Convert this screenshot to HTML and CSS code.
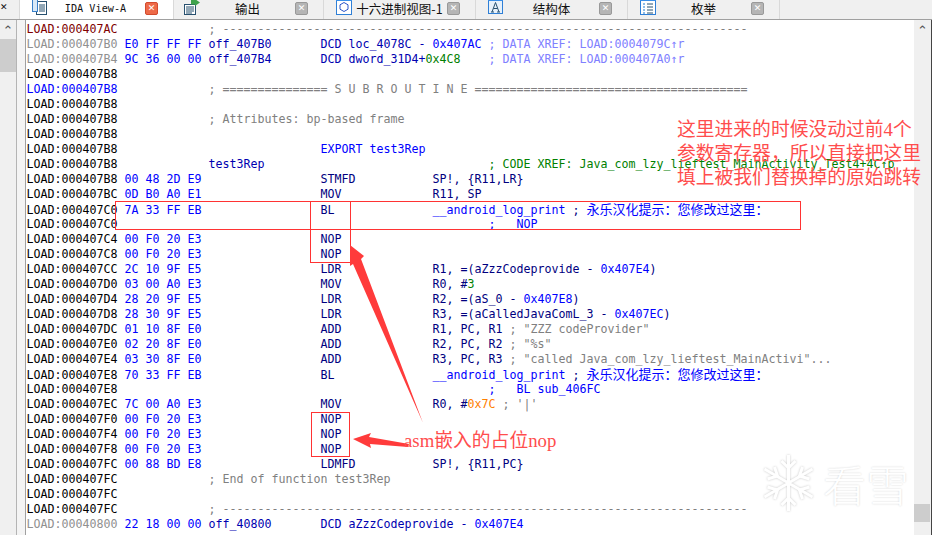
FILE: index.html
```html
<!DOCTYPE html>
<html lang="zh">
<head>
<meta charset="utf-8">
<title>IDA View-A</title>
<link rel="stylesheet" href="styles.css">
</head>
<body>
<div class="app">
  <div class="tabs">
    <div class="tab-stub"><span class="stub-x">✕</span></div>
    <div class="tab active">
      <svg class="ticon" viewBox="0 0 16 16"><rect x="4.5" y="2.5" width="10" height="13" fill="#fff" stroke="#27506f"/><rect x="0.5" y="0.5" width="5" height="12" fill="#d9e9f7" stroke="#3a80c9"/><path d="M7 6h6M7 8h6M7 10h6M7 12h6" stroke="#27506f"/></svg>
      <span class="tlabel mono">IDA View-A</span>
      <span class="tclose red">✕</span>
    </div>
    <div class="tab w1">
      <svg class="ticon" viewBox="0 0 16 16"><rect x="0.5" y="5.5" width="11" height="10" fill="#fff" stroke="#27506f"/><path d="M2 8h8M2 10h8M2 12h8M2 14h6" stroke="#27506f"/><path d="M7 1h4V0l5 3.5L11 7V5.500H7z" fill="#3fa34d"/></svg>
      <span class="tlabel">输出</span>
      <span class="tclose">✕</span>
    </div>
    <div class="tab w2">
      <svg class="ticon" viewBox="0 0 16 16"><rect x="0.500" y="0.500" width="15" height="15" fill="#fff" stroke="#2f7fd6"/><rect x="0" y="0" width="16" height="2" fill="#3a8fe8"/><path d="M8 3.500l4 2.300v4.400l-4 2.300-4-2.300V5.800z" fill="#fff" stroke="#2b55c9"/></svg>
      <span class="tlabel">十六进制视图-1</span>
      <span class="tclose">✕</span>
    </div>
    <div class="tab w3">
      <svg class="ticon" viewBox="0 0 16 16"><rect x="0.500" y="0.500" width="14" height="14" fill="#e6f1fb" stroke="#2f7fd6"/><rect x="0" y="0" width="15" height="2" fill="#3a8fe8"/><path d="M4 13L7.500 3.500 11 13M5.500 9.500h4M3 13h3M9 13h3" fill="none" stroke="#27506f"/></svg>
      <span class="tlabel">结构体</span>
      <span class="tclose">✕</span>
    </div>
    <div class="tab w4">
      <svg class="ticon" viewBox="0 0 16 16"><rect x="0.500" y="0.500" width="15" height="15" fill="#fff" stroke="#2f7fd6"/><rect x="0" y="0" width="16" height="2" fill="#3a8fe8"/><path d="M3 5h2M3 8h2M3 11h2M3 14h2" stroke="#1d7ad1"/><path d="M7 5h6M7 8h6M7 11h6M7 14h6" stroke="#27506f"/></svg>
      <span class="tlabel">枚举</span>
      <span class="tclose">✕</span>
    </div>
    <div class="tab-rest"></div>
  </div>
  <div class="main">
    <div class="gutter">
      <div class="vbar">
        <div class="up">⌃</div>
        <div class="thumb-left"></div>
      </div>
    </div>
    <div class="code mono">
<div class="row"><span class="red-d">LOAD:000407AC</span>             <span class="c">; ---------------------------------------------------------------------------</span></div>
<div class="row"><span class="g">LOAD:000407B0</span> <span class="b">E0 FF FF FF</span> <span class="n">off_407B0</span>       <span class="n">DCD loc_4078C - </span><span class="b">0x407AC</span> <span class="x">; DATA XREF: LOAD:0004079C↑r</span></div>
<div class="row"><span class="g">LOAD:000407B4</span> <span class="b">9C 36 00 00</span> <span class="n">off_407B4</span>       <span class="n">DCD dword_31D4+</span><span class="gr">0x4C8</span>    <span class="x">; DATA XREF: LOAD:000407A0↑r</span></div>
<div class="row">LOAD:000407B8</div>
<div class="row"><span class="bl">LOAD:000407B8</span>             <span class="c">; =============== S U B R O U T I N E =======================================</span></div>
<div class="row">LOAD:000407B8</div>
<div class="row">LOAD:000407B8             <span class="c">; Attributes: bp-based frame</span></div>
<div class="row">LOAD:000407B8</div>
<div class="row">LOAD:000407B8                             <span class="b">EXPORT test3Rep</span></div>
<div class="row">LOAD:000407B8             <span class="n">test3Rep</span>                                <span class="grn">; CODE XREF: Java_com_lzy_lieftest_MainActivity_Test4+4C↑p</span></div>
<div class="row">LOAD:000407B8 <span class="b">00 48 2D E9</span>                 <span class="k">STMFD</span>           <span class="k">SP!, {R11,LR}</span></div>
<div class="row">LOAD:000407BC <span class="b">0D B0 A0 E1</span>                 <span class="k">MOV</span>             <span class="k">R11, SP</span></div>
<div class="row">LOAD:000407C0 <span class="b">7A 33 FF EB</span>                 <span class="k">BL</span>              <span class="bu">__android_log_print</span> <span class="k">;</span> <span class="cj">永乐汉化提示：您修改过这里：</span></div>
<div class="row">LOAD:000407C0                                                     <span class="b">;   NOP</span></div>
<div class="row">LOAD:000407C4 <span class="b">00 F0 20 E3</span>                 <span class="k">NOP</span></div>
<div class="row">LOAD:000407C8 <span class="b">00 F0 20 E3</span>                 <span class="k">NOP</span></div>
<div class="row">LOAD:000407CC <span class="b">2C 10 9F E5</span>                 <span class="k">LDR</span>             <span class="k">R1, =(aZzzCodeprovide - </span><span class="b">0x407E4</span><span class="k">)</span></div>
<div class="row">LOAD:000407D0 <span class="b">03 00 A0 E3</span>                 <span class="k">MOV</span>             <span class="k">R0, #</span><span class="gr">3</span></div>
<div class="row">LOAD:000407D4 <span class="b">28 20 9F E5</span>                 <span class="k">LDR</span>             <span class="k">R2, =(aS_0 - </span><span class="b">0x407E8</span><span class="k">)</span></div>
<div class="row">LOAD:000407D8 <span class="b">28 30 9F E5</span>                 <span class="k">LDR</span>             <span class="k">R3, =(aCalledJavaComL_3 - </span><span class="b">0x407EC</span><span class="k">)</span></div>
<div class="row">LOAD:000407DC <span class="b">01 10 8F E0</span>                 <span class="k">ADD</span>             <span class="k">R1, PC, R1</span> <span class="c">; "ZZZ codeProvider"</span></div>
<div class="row">LOAD:000407E0 <span class="b">02 20 8F E0</span>                 <span class="k">ADD</span>             <span class="k">R2, PC, R2</span> <span class="c">; "%s"</span></div>
<div class="row">LOAD:000407E4 <span class="b">03 30 8F E0</span>                 <span class="k">ADD</span>             <span class="k">R3, PC, R3</span> <span class="c">; "called Java_com_lzy_lieftest_MainActivi"...</span></div>
<div class="row">LOAD:000407E8 <span class="b">70 33 FF EB</span>                 <span class="k">BL</span>              <span class="bu">__android_log_print</span> <span class="k">;</span> <span class="cj">永乐汉化提示：您修改过这里：</span></div>
<div class="row">LOAD:000407E8                                                     <span class="b">;   BL sub_406FC</span></div>
<div class="row">LOAD:000407EC <span class="b">7C 00 A0 E3</span>                 <span class="k">MOV</span>             <span class="k">R0, #</span><span class="o">0x7C</span> <span class="c">; '|'</span></div>
<div class="row">LOAD:000407F0 <span class="b">00 F0 20 E3</span>                 <span class="k">NOP</span></div>
<div class="row">LOAD:000407F4 <span class="b">00 F0 20 E3</span>                 <span class="k">NOP</span></div>
<div class="row">LOAD:000407F8 <span class="b">00 F0 20 E3</span>                 <span class="k">NOP</span></div>
<div class="row">LOAD:000407FC <span class="b">00 88 BD E8</span>                 <span class="k">LDMFD</span>           <span class="k">SP!, {R11,PC}</span></div>
<div class="row">LOAD:000407FC             <span class="c">; End of function test3Rep</span></div>
<div class="row">LOAD:000407FC</div>
<div class="row">LOAD:000407FC             <span class="c">; ---------------------------------------------------------------------------</span></div>
<div class="row"><span class="g">LOAD:00040800</span> <span class="b">22 18 00 00</span> <span class="n">off_40800</span>       <span class="n">DCD aZzzCodeprovide - </span><span class="b">0x407E4</span></div>
    </div>
    <div class="sbar">
      <div class="up">⌃</div>
      <div class="thumb-right"></div>
    </div>
    <div class="box box1"></div>
    <div class="box box2"></div>
    <div class="box box3"></div>
    <svg class="arrows" viewBox="0 0 932 535">
      <path d="M350 245L364 256 361 259 423 423 353 264 350 266Z" fill="#ff3b3b"/>
      <path d="M353 439L371 433 369 437 409 444 408 447 370 444 371 448Z" fill="#ff3b3b"/>
    </svg>
    <div class="note note1">这里进来的时候没动过前4个<br>参数寄存器，所以直接把这里<br>填上被我们替换掉的原始跳转</div>
    <div class="note note2">asm嵌入的占位nop</div>
    <div class="mark">
      <svg class="flake" viewBox="0 0 52 60"><g fill="none" stroke="#fff" stroke-width="3"><path d="M26 2v56M2 16l48 28M50 16L2 44"/><path d="M19 8l7 7 7-7M19 52l7-7 7 7M5 26l10-3-3-9M47 26l-10-3 3-9M5 34l10 3-3 9M47 34l-10 3 3 9"/></g></svg>
      <span class="mark-text">看雪</span>
    </div>
  </div>
</div>
</body>
</html>
```
FILE: styles.css
```css
html, body { margin: 0; padding: 0; }
body { width: 932px; height: 535px; overflow: hidden; background: #fff; font-family: "Noto Sans CJK SC", sans-serif; }
.app { width: 932px; height: 535px; display: flex; flex-direction: column; position: relative; }
.mono { font-family: "DejaVu Sans Mono", "Noto Sans CJK SC", monospace; }
.tabs { height: 19px; display: flex; background: #f0f0f0; border-bottom: 1px solid #a0a0a0; }
.tab-stub { width: 20px; box-sizing: border-box; border-right: 1px solid #d9d9d9; color: #111; overflow: hidden; }
.stub-x { display: block; font: 700 9px/15px "DejaVu Sans", sans-serif; }
.tab { height: 19px; display: flex; align-items: center; box-sizing: border-box; border-right: 1px solid #d9d9d9; font-size: 12px; color: #111; }
.tab.active { width: 154px; background: #fff; padding-left: 12px; }
.tab.w1 { width: 150px; padding-left: 10px; }
.tab.w2 { width: 152px; padding-left: 12px; }
.tab.w3 { width: 152px; padding-left: 12px; }
.tab.w4 { width: 152px; padding-left: 12px; }
.tab-rest { flex: 1; }
.ticon { width: 16px; height: 16px; flex: none; margin-top: -5px; }
.tlabel { flex: 1; text-align: center; font-size: 12.5px; white-space: nowrap; margin-top: -2px; }
.tlabel.mono { font-size: 10.2px; padding-right: 2px; }
.tclose { width: 13px; height: 13px; flex: none; margin-right: 15px; margin-top: -2px; background: #b5b5b5; border: 1px solid #999; border-radius: 2px; color: #fff; font-size: 9px; line-height: 11px; text-align: center; font-weight: 700; box-sizing: border-box; font-family: "DejaVu Sans", sans-serif; }
.tclose.red { background: #ee6a48; border-color: #d24b2e; }
.main { flex: 1; display: flex; position: relative; overflow: hidden; }
.gutter { width: 26px; flex: none; box-sizing: border-box; background: #f4f4f4; border-right: 1px solid #a0a0a0; }
.vbar { width: 17px; height: 100%; box-sizing: border-box; background: #f0f0f0; border-right: 1px solid #b4b4b4; }
.up { height: 19px; color: #555; font: 13px/22px "DejaVu Sans", sans-serif; text-align: center; }
.thumb-left { width: 16px; height: 33px; background: #cdcdcd; }
.code { flex: 1; padding: 2px 0 0 0.6px; font-size: 11.63px; line-height: 15px; color: #000; overflow: hidden; }
.row { height: 15px; white-space: pre; }
.sbar { width: 18px; flex: none; box-sizing: border-box; background: #f0f0f0; border-right: 1px solid #444; }
.thumb-right { width: 16px; height: 18px; margin-top: 465px; background: #cdcdcd; }
.red-d { color: #800000; }
.g { color: #909090; }
.b { color: #0000ff; }
.bl { color: #0000ff; }
.n { color: #0000b0; }
.k { color: #000080; }
.bu { color: #0000ff; }
.c { color: #808080; }
.x { color: #8080ff; }
.gr { color: #008000; }
.grn { color: #008000; }
.o { color: #ff8000; }
.cj { color: #0000ff; font-size: 13px; }
.box { position: absolute; border: 1px solid #ff3333; box-sizing: border-box; }
.box1 { left: 115px; top: 181px; width: 686px; height: 29px; }
.box2 { left: 310px; top: 181px; width: 41px; height: 62px; }
.box3 { left: 311px; top: 392px; width: 39px; height: 45px; }
.arrows { position: absolute; left: 0; top: -20px; width: 932px; height: 535px; pointer-events: none; }
.note { position: absolute; color: #ff4d4d; font-family: "Liberation Serif", "Noto Sans CJK SC", serif; white-space: nowrap; }
.note1 { left: 677px; top: 98px; font-size: 18.8px; line-height: 24px; }
.note2 { left: 404px; top: 408px; font-size: 18.8px; line-height: 26px; }
.mark { position: absolute; left: 762px; top: 433px; display: flex; align-items: center; gap: 8px; }
.flake { width: 53px; height: 60px; filter: drop-shadow(0 0 1px #c8c8c8); }
.mark-text { color: #fff; font-size: 43px; line-height: 50px; font-weight: 300; text-shadow: 0 0 2px #d0d0d0; }
```
